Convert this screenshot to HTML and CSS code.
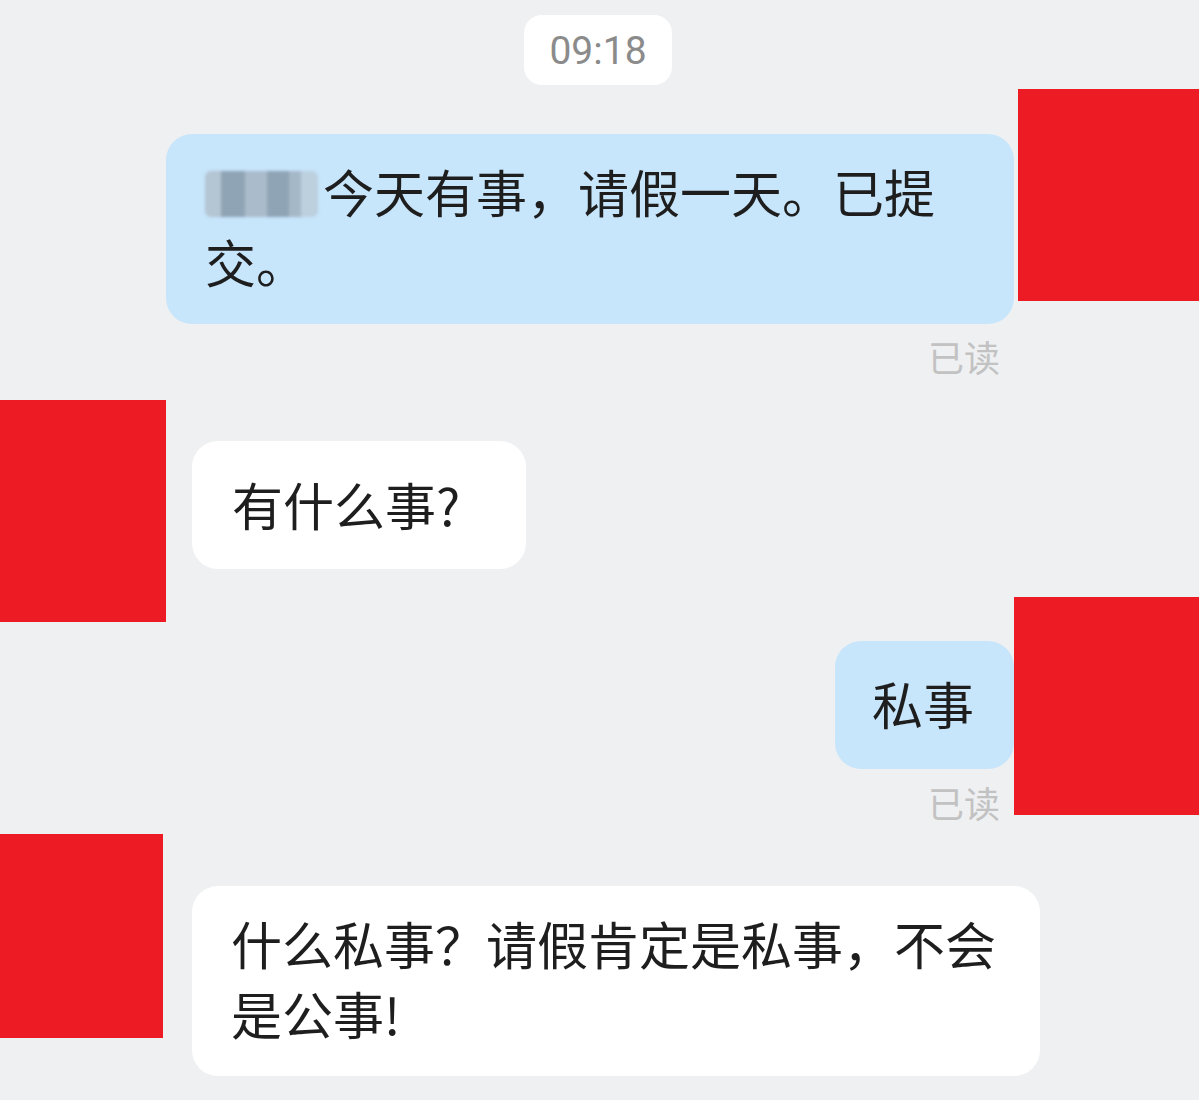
FILE: index.html
```html
<!DOCTYPE html>
<html>
	<head>
		<meta charset="utf-8">
		<title>聊天</title>
		<link rel="stylesheet" href="styles.css">
	</head>
	<body>
		<div class="chat">
			<div class="time-row">
				<span class="time">09:18</span>
			</div>

			<div class="row out first">
				<div class="bubble blue"><span class="blur-name"></span>今天有事，请假一天。已提交。</div>
				<div class="read">已读</div>
			</div>

			<div class="row in second">
				<div class="bubble white">有什么事?</div>
			</div>

			<div class="row out third">
				<div class="bubble blue">私事</div>
				<div class="read">已读</div>
			</div>

			<div class="row in fourth">
				<div class="bubble white">什么私事？请假肯定是私事，不会是公事!</div>
			</div>

			<!-- 打码的头像 -->
			<div class="mask m1"></div>
			<div class="mask m2"></div>
			<div class="mask m3"></div>
			<div class="mask m4"></div>
		</div>
	</body>
</html>
```

FILE: styles.css
```css
*{margin:0;padding:0;box-sizing:border-box;}
body{background:#eff0f2;font-family:"Noto Sans CJK SC","Noto Sans",sans-serif;color:#1e1e1e;}
.chat{position:relative;width:1199px;height:1100px;overflow:hidden;}

.time-row{display:flex;justify-content:center;padding:15px 3px 0 0;}
.time{display:flex;align-items:center;justify-content:center;height:70px;padding:2px 25px 0;background:#fff;border-radius:18px;
font-family:Roboto,"Liberation Sans",sans-serif;font-size:39px;color:#8b8b8b;}

.row{display:flex;flex-direction:column;}
.row.out{align-items:flex-end;padding-right:185px;}
.row.in{align-items:flex-start;padding-left:192px;}
.row.first{margin-top:49px;}
.row.second{margin-top:67px;}
.row.third{margin-top:72px;}
.row.fourth{margin-top:66px;}

.bubble{max-width:848px;min-height:128px;padding:22px 40px 28px 39px;font-size:51px;line-height:70px;border-radius:26px;}
.bubble.blue{background:#c7e5fb;}
.bubble.white{background:#fff;}
.row.second .bubble{padding:28px 66px 28px 40px;}
.row.third .bubble{padding:27px 40px 29px 37px;}

.blur-name{display:inline-block;width:113px;height:46px;margin-right:5px;vertical-align:-4px;border-radius:6px;filter:blur(1.5px);
background:linear-gradient(90deg,#b4c5d3 0,#b4c5d3 16px,#8fa4b5 16px,#8fa4b5 40px,#aabccb 40px,#aabccb 62px,#8fa4b5 62px,#8fa4b5 84px,#a5b8c8 84px,#a5b8c8 96px,#bcd0de 96px,#bcd0de 113px);}

.read{margin-top:14px;margin-right:14px;font-size:36px;line-height:36px;color:#c2c2c2;}
.row.third .read{margin-top:15px;}

.mask{position:absolute;background:#ed1c24;}
.m1{left:1018px;top:89px;width:181px;height:212px;}
.m2{left:0;top:400px;width:166px;height:222px;}
.m3{left:1014px;top:597px;width:185px;height:218px;}
.m4{left:0;top:834px;width:163px;height:204px;}
```
